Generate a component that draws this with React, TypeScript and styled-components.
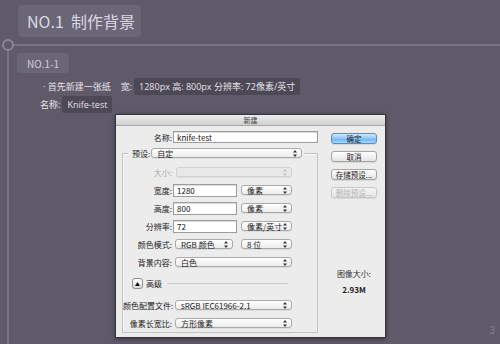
import React from "react";
import styled, { createGlobalStyle, css } from "styled-components";

const GlobalStyle = createGlobalStyle`
  html, body {
    margin: 0;
    padding: 0;
    background: #5f5a69;
  }
  body {
    width: 500px;
    height: 344px;
    overflow: hidden;
    font-family: "Noto Sans CJK SC", "Noto Sans", sans-serif;
  }
`;

const Page = styled.div`
  height: 344px;
  box-sizing: border-box;
  padding-top: 5px;
  display: flex;
  flex-direction: column;
  overflow: hidden;
`;

const TitleBox = styled.div`
  align-self: flex-start;
  margin-left: 18px;
  height: 32px;
  padding: 0 6px 0 9px;
  display: flex;
  align-items: center;
  background: #6b6677;
  border-radius: 4px;
  color: #dcd8e2;
  font-size: 16px;
  white-space: pre;
`;

const Rail = styled.div`
  height: 12px;
  margin-top: 2px;
  padding-left: 2px;
  display: flex;
  align-items: center;
`;

const RailDot = styled.div`
  width: 12px;
  height: 12px;
  box-sizing: border-box;
  border: 2px solid #8b8697;
  border-radius: 50%;
`;

const RailLine = styled.div`
  flex: 1;
  height: 2px;
  background: #7a7586;
`;

const Body = styled.div`
  flex: 1;
  min-height: 0;
  margin-left: 7px;
  border-left: 2px solid #787384;
  padding-left: 8px;
  display: flex;
  flex-direction: column;
`;

const SubTitle = styled.div`
  align-self: flex-start;
  margin-top: 2px;
  height: 20px;
  padding: 0 10px;
  display: flex;
  align-items: center;
  background: #6b6677;
  border-radius: 3px;
  color: #d2ced8;
  font-size: 10px;
`;

const InfoLine = styled.div<{ $indent: number; $top?: number }>`
  display: flex;
  align-items: center;
  height: 18px;
  margin-left: ${(p) => p.$indent}px;
  margin-top: ${(p) => p.$top ?? 0}px;
  color: #e6e2ea;
  font-family: "Open Sans", "Noto Sans CJK SC", sans-serif;
  font-size: 9px;
  white-space: pre;
`;

const Spaced = styled.span<{ $gap: number }>`
  margin-left: ${(p) => p.$gap}px;
`;

const Mark = styled.span<{ $gap: number }>`
  height: 17px;
  margin-left: ${(p) => p.$gap}px;
  padding: 0 5px;
  display: flex;
  align-items: center;
  background: #4d4856;
  border-radius: 2px;
`;

const DialogRow = styled.div`
  display: flex;
  align-items: flex-end;
  margin-top: 1px;
`;

const Dialog = styled.div`
  margin-left: 98px;
  width: 271px;
  height: 224px;
  box-sizing: border-box;
  border: 1px solid #34323a;
  background: #ececec;
  box-shadow: 0 1px 4px rgba(0, 0, 0, 0.45);
  display: flex;
  flex-direction: column;
  color: #222;
  font-size: 8px;
`;

const TitleBar = styled.div`
  height: 10px;
  border-bottom: 1px solid #a8a8a8;
  background: linear-gradient(#ececec, #d0d0d0);
  display: flex;
  align-items: center;
  justify-content: center;
  color: #444;
  font-size: 7px;
`;

const DialogBody = styled.div`
  flex: 1;
  display: flex;
  padding-top: 5px;
`;

const LeftCol = styled.div`
  width: 202px;
  display: flex;
  flex-direction: column;
`;

const NameRow = styled.div`
  display: flex;
  align-items: center;
  height: 12px;
`;

const Label = styled.span<{ $w: number; $muted?: boolean }>`
  width: ${(p) => p.$w}px;
  flex-shrink: 0;
  text-align: right;
  white-space: nowrap;
  color: ${(p) => (p.$muted ? "#a9a9a9" : "#222")};
`;

const TextInput = styled.div<{ $w: number; $ml: number; $h?: number }>`
  width: ${(p) => p.$w}px;
  margin-left: ${(p) => p.$ml}px;
  height: ${(p) => p.$h ?? 12}px;
  box-sizing: border-box;
  padding-left: 3px;
  display: flex;
  align-items: center;
  background: #fff;
  border: 1px solid #9c9c9c;
  box-shadow: inset 0 1px 1px rgba(0, 0, 0, 0.15);
  color: #111;
`;

const Group = styled.div`
  margin-top: 10px;
  margin-left: 6px;
  width: 196px;
  box-sizing: border-box;
  border: 1px solid #c2c2c2;
  box-shadow: inset 1px 1px 0 #f8f8f8;
  display: flex;
  flex-direction: column;
`;

const Legend = styled.div`
  align-self: flex-start;
  margin-top: -6px;
  margin-left: 5px;
  height: 10px;
  padding: 0 2px 0 4px;
  display: flex;
  align-items: center;
  background: #ececec;
`;

const Row = styled.div<{ $h?: number; $top?: number }>`
  display: flex;
  align-items: center;
  height: ${(p) => p.$h ?? 18}px;
  margin-top: ${(p) => p.$top ?? 0}px;
`;

const SelectBox = styled.div<{ $w: number; $ml: number; $disabled?: boolean }>`
  width: ${(p) => p.$w}px;
  margin-left: ${(p) => p.$ml}px;
  height: 10px;
  box-sizing: border-box;
  padding: 0 4px 0 5px;
  display: flex;
  align-items: center;
  justify-content: space-between;
  border: 1px solid #a9a9a9;
  border-radius: 3px;
  background: linear-gradient(#ffffff, #ececec);
  box-shadow: 0 1px 0 rgba(0, 0, 0, 0.06);
  color: #222;
  white-space: nowrap;
  ${(p) =>
    p.$disabled &&
    css`
      border-color: #d2d2d2;
      background: #e8e8e8;
      color: #b0b0b0;
    `}
`;

const AdvButton = styled.div`
  width: 11px;
  height: 11px;
  margin-left: 9px;
  box-sizing: border-box;
  border: 1px solid #8e8e8e;
  border-radius: 3px;
  background: linear-gradient(#ffffff, #dcdcdc);
  display: flex;
  align-items: center;
  justify-content: center;
`;

const AdvText = styled.span`
  margin-left: 3px;
`;

const Divider = styled.div`
  flex: 1;
  height: 1px;
  margin: 0 29px 0 5px;
  background: #cbcbcb;
`;

const RightCol = styled.div`
  width: 46px;
  margin-left: 13px;
  padding-top: 2px;
  display: flex;
  flex-direction: column;
`;

const Button = styled.div<{ $variant?: "primary" | "disabled" }>`
  height: 11px;
  margin-bottom: 7px;
  box-sizing: border-box;
  display: flex;
  align-items: center;
  justify-content: center;
  border: 1px solid #a4a4a4;
  border-radius: 3px;
  background: linear-gradient(#ffffff, #e4e4e4);
  box-shadow: 0 1px 0 rgba(0, 0, 0, 0.08);
  font-size: 7.5px;
  color: #222;
  white-space: nowrap;
  ${(p) =>
    p.$variant === "primary" &&
    css`
      border-color: #5b8cbc;
      background: linear-gradient(#cfe8fd, #8cc6f7 50%, #66b2f2 51%, #a8d6fb);
    `}
  ${(p) =>
    p.$variant === "disabled" &&
    css`
      border-color: #c6c6c6;
      background: linear-gradient(#f4f4f4, #e6e6e6);
      color: #b3b3b3;
    `}
`;

const SizeInfo = styled.div`
  margin-top: 63px;
  display: flex;
  flex-direction: column;
  align-items: center;
  color: #333;
`;

const SizeValue = styled.span`
  margin-top: 5px;
  font-weight: bold;
  color: #222;
`;

const PageNum = styled.div`
  margin-left: auto;
  margin-right: 5px;
  margin-bottom: 2px;
  color: #868190;
  font-size: 10px;
  font-family: "Liberation Sans", sans-serif;
`;

const Arrows = ({ muted }: { muted?: boolean }) => (
  <svg width="4" height="7" viewBox="0 0 4 7">
    <path d="M2 0 L4 2.6 H0 Z M2 7 L0 4.4 H4 Z" fill={muted ? "#c0c0c0" : "#333"} />
  </svg>
);

const Select = ({
  w,
  ml,
  text,
  disabled,
}: {
  w: number;
  ml: number;
  text?: string;
  disabled?: boolean;
}) => (
  <SelectBox $w={w} $ml={ml} $disabled={disabled}>
    <span>{text}</span>
    <Arrows muted={disabled} />
  </SelectBox>
);

const App = () => {
  return (
    <>
      <GlobalStyle />
      <Page>
        <TitleBox>NO.1  制作背景</TitleBox>
        <Rail>
          <RailDot />
          <RailLine />
        </Rail>
        <Body>
          <SubTitle>NO.1-1</SubTitle>
          <InfoLine $indent={26} $top={4}>
            <span>· 首先新建一张纸</span>
            <Spaced $gap={10}>宽:</Spaced>
            <Mark $gap={2}>1280px 高: 800px 分辨率: 72像素/英寸</Mark>
          </InfoLine>
          <InfoLine $indent={23}>
            <span>名称:</span>
            <Mark $gap={2}>Knife-test</Mark>
          </InfoLine>
          <DialogRow>
            <Dialog>
              <TitleBar>新建</TitleBar>
              <DialogBody>
                <LeftCol>
                  <NameRow>
                    <Label $w={56}>名称:</Label>
                    <TextInput $w={145} $ml={1}>knife-test</TextInput>
                  </NameRow>
                  <Group>
                    <Legend>
                      <span>预设:</span>
                      <Select w={151} ml={1} text="自定" />
                    </Legend>
                    <Row $top={5}>
                      <Label $w={49} $muted>大小:</Label>
                      <Select w={116} ml={4} disabled />
                    </Row>
                    <Row>
                      <Label $w={49}>宽度:</Label>
                      <TextInput $w={64} $ml={1} $h={13}>1280</TextInput>
                      <Select w={51} ml={4} text="像素" />
                    </Row>
                    <Row>
                      <Label $w={49}>高度:</Label>
                      <TextInput $w={64} $ml={1} $h={13}>800</TextInput>
                      <Select w={51} ml={4} text="像素" />
                    </Row>
                    <Row>
                      <Label $w={49}>分辨率:</Label>
                      <TextInput $w={64} $ml={1} $h={13}>72</TextInput>
                      <Select w={51} ml={4} text="像素/英寸" />
                    </Row>
                    <Row>
                      <Label $w={49}>颜色模式:</Label>
                      <Select w={58} ml={3} text="RGB 颜色" />
                      <Select w={51} ml={8} text="8 位" />
                    </Row>
                    <Row>
                      <Label $w={49}>背景内容:</Label>
                      <Select w={117} ml={3} text="白色" />
                    </Row>
                    <Row $h={25}>
                      <AdvButton>
                        <svg width="5" height="4" viewBox="0 0 5 4">
                          <path d="M2.5 0 L5 4 H0 Z" fill="#111" />
                        </svg>
                      </AdvButton>
                      <AdvText>高级</AdvText>
                      <Divider />
                    </Row>
                    <Row>
                      <Label $w={49}>颜色配置文件:</Label>
                      <Select w={117} ml={3} text="sRGB IEC61966-2.1" />
                    </Row>
                    <Row>
                      <Label $w={49}>像素长宽比:</Label>
                      <Select w={117} ml={3} text="方形像素" />
                    </Row>
                  </Group>
                </LeftCol>
                <RightCol>
                  <Button $variant="primary">确定</Button>
                  <Button>取消</Button>
                  <Button>存储预设...</Button>
                  <Button $variant="disabled">删除预设...</Button>
                  <SizeInfo>
                    <span>图像大小:</span>
                    <SizeValue>2.93M</SizeValue>
                  </SizeInfo>
                </RightCol>
              </DialogBody>
            </Dialog>
            <PageNum>3</PageNum>
          </DialogRow>
        </Body>
      </Page>
    </>
  );
};

export default App;
